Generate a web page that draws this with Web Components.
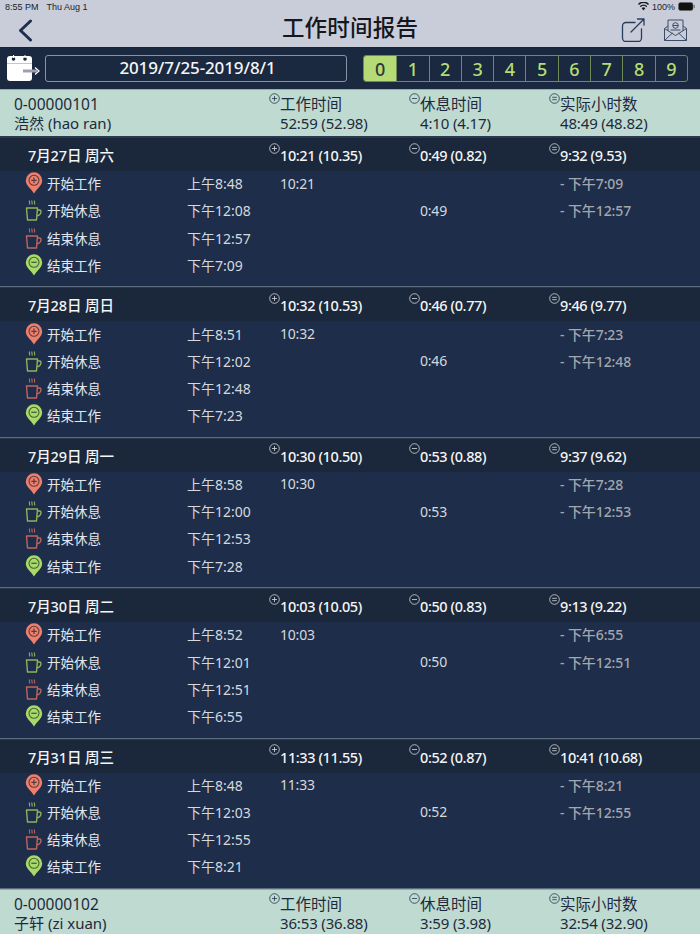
<!DOCTYPE html>
<html lang="zh"><head><meta charset="utf-8"><title>工作时间报告</title>
<style>
html,body{margin:0;padding:0;background:#1e2e4a;height:934px;overflow:hidden}
body{font-family:"Noto Sans","Noto Sans CJK SC",sans-serif}
</style></head><body>
<report-app></report-app>
<script>
const MARK = {
  plus: '<circle cx="5.5" cy="5.5" r="4.8"/><path d="M3 5.5h5M5.5 3v5"/>',
  minus: '<circle cx="5.5" cy="5.5" r="4.8"/><path d="M3 5.5h5"/>',
  equal: '<circle cx="5.5" cy="5.5" r="4.8"/><path d="M3.2 4.3h4.6M3.2 6.7h4.6"/>'
};
const markSvg = k => `<svg viewBox="0 0 11 11" width="11" height="11" fill="none" stroke="currentColor" stroke-width=".8">${MARK[k]}</svg>`;
const FONT = '"Noto Sans","Noto Sans CJK SC",sans-serif';

class StatusNav extends HTMLElement {
  constructor() {
    super();
    const root = this.attachShadow({ mode: 'open' });
    root.innerHTML = `<style>
:host{display:block;height:48px;background:#c9cdda;color:#1c1e26;box-sizing:border-box;border-bottom:1px solid #16233a}
.st{height:13px;display:flex;align-items:center;padding:0 5px;font:9px "Liberation Sans",sans-serif;color:#20222a;gap:8px}
.sp{flex:1}.r{display:flex;align-items:center;gap:3px}
.nav{height:34px;display:grid;grid-template-columns:1fr auto 1fr;align-items:center}
h1{margin:0;align-self:start;font:500 22.5px/27px "Noto Sans CJK SC",sans-serif;color:#15171c;letter-spacing:.2px}
.left{padding-left:18px;display:flex}
.right{display:flex;justify-content:flex-end;gap:19px;padding-right:13px;align-items:center}
svg{display:block}
</style>
<div class="st"><span>8:55 PM</span><span>Thu Aug 1</span><span class="sp"></span><span class="r">
<svg width="11" height="9" viewBox="0 0 14 10" preserveAspectRatio="none"><path d="M7 9.5 4.7 7a3.4 3.4 0 0 1 4.6 0zM3.5 5.8l-1.2-1.3a7 7 0 0 1 9.4 0l-1.2 1.3a5.2 5.2 0 0 0-7 0zM1.2 3.4 0 2.2a10 10 0 0 1 14 0l-1.2 1.2a8.3 8.3 0 0 0-11.6 0z" fill="#1a1c22"/></svg>
<span>100%</span>
<svg width="17" height="9" viewBox="0 0 17 9"><rect x=".5" y=".5" width="14.5" height="8" rx="2" fill="#111" stroke="#666" stroke-width=".6"/><rect x="15.6" y="3" width="1.2" height="3" fill="#777"/></svg></span></div>
<div class="nav"><div class="left"><svg width="15" height="23" viewBox="0 0 15 23" fill="none" stroke="#1e2f4e" stroke-width="3" stroke-linecap="round" stroke-linejoin="round"><path d="M12.5 2 2.5 11.5l10 9.5"/></svg></div>
<h1>工作时间报告</h1>
<div class="right">
<svg width="24" height="24" viewBox="0 0 24 24" fill="none" stroke="#2a3c5c" stroke-width="1.3" stroke-linecap="round" stroke-linejoin="round"><path d="M14 4.5H5A3.5 3.5 0 0 0 1.5 8v12A3.5 3.5 0 0 0 5 23.5h12a3.5 3.5 0 0 0 3.5-3.5v-9M10 14 23 1M16.5 1H23v6"/></svg>
<svg width="23" height="22" viewBox="0 0 23 22" fill="none" stroke="#3c4c68" stroke-width="1"><path d="M.5 9.5 4 7V1h15v6l3.5 2.500v12H.5zM.5 9.500l11 7 11-7M.5 21.500l8-7.500M22.500 21.500l-8-7.500M4 7v4.800M19 7v4.800"/><circle cx="11.500" cy="6.500" r="2.800"/><path d="M9 6.500h5M6.500 11h10"/></svg>
</div></div>`;
  }
}
customElements.define('status-nav', StatusNav);

class DateBar extends HTMLElement {
  constructor() {
    super();
    const nums = [0,1,2,3,4,5,6,7,8,9].map(n => `<span class="${n === 0 ? 'on' : ''}">${n}</span>`).join('');
    const root = this.attachShadow({ mode: 'open' });
    root.innerHTML = `<style>
:host{display:flex;height:41px;background:#1a2840;box-sizing:border-box;padding:7px 12px 7px 7px;align-items:stretch;color:#fff}
svg{display:block;align-self:center;margin-top:-1px;flex:none}
.date{width:302px;margin-left:5px;box-sizing:border-box;border:1px solid #8a93a3;border-radius:3px;text-align:center;padding-left:3px;letter-spacing:-.1px;font:500 17px/24px ${FONT};color:#f4f5f7}
.seg{margin-left:16px;display:grid;grid-template-columns:repeat(10,1fr);width:325px;box-sizing:border-box;border:1px solid #6f8a55;border-radius:3px;overflow:hidden;font:500 18px/26px ${FONT};color:#b5dc74;text-align:center}
.seg span{border-left:1px solid #6f8a55;margin-right:-1px;padding-right:1px}
.seg span:first-child{border-left:0}
.seg .on{background:#b6db76;color:#2b3a3a}
</style>
<svg width="33" height="26" viewBox="0 0 33 26"><rect x="0" y="1" width="25" height="25" rx="3" fill="#fff"/><rect x="0" y="8" width="25" height=".6" fill="#9aa3b2"/><circle cx="6.500" cy="4" r="1.800" fill="#1a2840"/><circle cx="18" cy="4" r="1.800" fill="#1a2840"/><path d="M6.500 0v3M18 0v3" stroke="#fff" stroke-width="1"/><path d="M16 16h14" stroke="#9aa0ad" stroke-width="3"/><path d="M28 12.500l4 3.500-4 3.500" fill="none" stroke="#fff" stroke-width="1.200"/></svg>
<div class="date">2019/7/25-2019/8/1</div><div class="seg">${nums}</div>`;
  }
}
customElements.define('date-bar', DateBar);

class EmpHeader extends HTMLElement {
  constructor() {
    super();
    this.attachShadow({ mode: 'open' });
  }
  connectedCallback() {
    const a = n => this.getAttribute(n);
    const c = (k, t, v) => `<div class="c"><i>${markSvg(k)}</i><div><b>${t}</b><span>${v}</span></div></div>`;
    this.shadowRoot.innerHTML = `<style>
:host{display:block;height:48px;background:#bfdad0;color:#1d2a3d;border-top:1px solid #8fb0a8;border-bottom:1px solid #2a3a50;box-sizing:border-box}
.g{display:grid;grid-template-columns:269px 140px 140px 1fr;height:100%;font-size:15px;line-height:18px}
.n{padding:5px 0 0 14px;font-size:15px}
.n div:first-child{height:19px;font-size:15.5px}
.n div{height:18px}
.c{display:flex;padding-top:5px}
i{display:block;width:11px;margin-top:-2px;color:#26354c}
i svg{display:block}
b{display:block;font-weight:400;height:19px;font-size:15.5px}
span{display:block;height:18px;letter-spacing:-.15px}
</style><div class="g"><div class="n"><div>${a('code')}</div><div>${a('name')}</div></div>
${c('plus','工作时间',a('work'))}${c('minus','休息时间',a('rest'))}${c('equal','实际小时数',a('net'))}</div>`;
  }
}
customElements.define('emp-header', EmpHeader);

const PIN = 'M9 21.5C6 16.5 .8 13.5 .8 8.5a8.2 8.2 0 0 1 16.4 0c0 5-5.2 8-8.2 13z';
const cup = c => `<svg width="18" height="22" viewBox="0 0 18 22" fill="none" stroke="${c}" stroke-width="1.4"><path d="M1.5 9h11l-1 12H2.500zM12.300 11h2.200A1.500 1.500 0 0 1 16 12.500c0 2-2 4-4.300 4.500" stroke-linejoin="round"/><path d="M4.500 1.500c-.8 1.500.8 2.300 0 4M7 1.500c-.8 1.500.8 2.300 0 4M9.500 1.500c-.8 1.500.8 2.300 0 4" stroke-width="1.100"/></svg>`;
const ICON = {
  start: `<svg width="18" height="22" viewBox="0 0 18 22"><path d="${PIN}" fill="#ee7f6a"/><circle cx="9" cy="8.300" r="5" fill="none" stroke="#5b3a3e" stroke-width="1.100"/><path d="M6.300 8.300h5.400M9 5.600v5.400" stroke="#5b3a3e" stroke-width="1.200"/></svg>`,
  end: `<svg width="18" height="22" viewBox="0 0 18 22"><path d="${PIN}" fill="#a9d968"/><circle cx="9" cy="8.300" r="5" fill="none" stroke="#44603a" stroke-width="1.100"/><path d="M6.300 8.300h5.400" stroke="#44603a" stroke-width="1.300"/></svg>`,
  cupOn: cup('#8db35c'),
  cupOff: cup('#c0645c')
};

class TimeRow extends HTMLElement {
  constructor() {
    super();
    this.attachShadow({ mode: 'open' });
  }
  connectedCallback() {
    const a = n => this.getAttribute(n) || '';
    this.shadowRoot.innerHTML = `<style>
:host{display:grid;grid-template-columns:22px 140px 93px 140px 140px 1fr;padding-left:25px;height:27.25px;align-items:center;font-size:14px;color:#e3e6ea}
svg{display:block}
.lab{font-size:13.5px}
.r{color:#a3a6aa;font-weight:500;letter-spacing:-.1px}
.t,.w,.b{color:#d5d9de}
.w,.b{letter-spacing:-.2px}
</style>
<span>${ICON[a('icon')]}</span><span class="lab">${a('label')}</span><span class="t">${a('time')}</span><span class="w">${a('work')}</span><span class="b">${a('rest')}</span><span class="r">${a('range')}</span>`;
  }
}
customElements.define('time-row', TimeRow);

class DayCard extends HTMLElement {
  constructor() {
    super();
    this.attachShadow({ mode: 'open' });
  }
  connectedCallback() {
    const a = n => this.getAttribute(n);
    const c = (k, v) => `<div class="c"><i>${markSvg(k)}</i><span>${v}</span></div>`;
    this.shadowRoot.innerHTML = `<style>
:host{display:block;height:150.4px;box-sizing:border-box;border-bottom:1px solid #5d6b7e;background:#1e2e4a}
.h{height:34px;background:#1b273a;display:grid;grid-template-columns:269px 140px 140px 1fr;color:#f4f5f7;font-size:14.5px;font-weight:500;line-height:37px;box-shadow:inset 0 1px 0 #2a384c}
.d{padding-left:28px;letter-spacing:-.1px}
.c{display:flex;letter-spacing:-.4px}
i{display:block;width:11px;height:11px;margin-top:5.5px;color:#d8dbe0}
i svg{display:block}
.rows{margin-top:-1.5px}
</style>
<div class="h"><div class="d">${a('day')}</div>${c('plus',a('work'))}${c('minus',a('rest'))}${c('equal',a('net'))}</div>
<div class="rows"><slot></slot></div>`;
  }
}
customElements.define('day-card', DayCard);

const DAYS = [
  ['7月27日 周六','10:21 (10.35)','0:49 (0.82)','9:32 (9.53)','上午8:48','下午12:08','下午12:57','下午7:09','10:21','0:49'],
  ['7月28日 周日','10:32 (10.53)','0:46 (0.77)','9:46 (9.77)','上午8:51','下午12:02','下午12:48','下午7:23','10:32','0:46'],
  ['7月29日 周一','10:30 (10.50)','0:53 (0.88)','9:37 (9.62)','上午8:58','下午12:00','下午12:53','下午7:28','10:30','0:53'],
  ['7月30日 周二','10:03 (10.05)','0:50 (0.83)','9:13 (9.22)','上午8:52','下午12:01','下午12:51','下午6:55','10:03','0:50'],
  ['7月31日 周三','11:33 (11.55)','0:52 (0.87)','10:41 (10.68)','上午8:48','下午12:03','下午12:55','下午8:21','11:33','0:52']
];

class ReportApp extends HTMLElement {
  constructor() {
    super();
    const days = DAYS.map(d => `<day-card day="${d[0]}" work="${d[1]}" rest="${d[2]}" net="${d[3]}">
<time-row icon="start" label="开始工作" time="${d[4]}" work="${d[8]}" range="- ${d[7]}"></time-row>
<time-row icon="cupOn" label="开始休息" time="${d[5]}" rest="${d[9]}" range="- ${d[6]}"></time-row>
<time-row icon="cupOff" label="结束休息" time="${d[6]}"></time-row>
<time-row icon="end" label="结束工作" time="${d[7]}"></time-row>
</day-card>`).join('');
    const root = this.attachShadow({ mode: 'open' });
    root.innerHTML = `<style>:host{display:block;width:700px;height:934px;overflow:hidden;font-family:${FONT}}</style>
<status-nav></status-nav><date-bar></date-bar>
<emp-header code="0-00000101" name="浩然 (hao ran)" work="52:59 (52.98)" rest="4:10 (4.17)" net="48:49 (48.82)"></emp-header>
${days}
<emp-header code="0-00000102" name="子轩 (zi xuan)" work="36:53 (36.88)" rest="3:59 (3.98)" net="32:54 (32.90)"></emp-header>`;
  }
}
customElements.define('report-app', ReportApp);
</script></body></html>
